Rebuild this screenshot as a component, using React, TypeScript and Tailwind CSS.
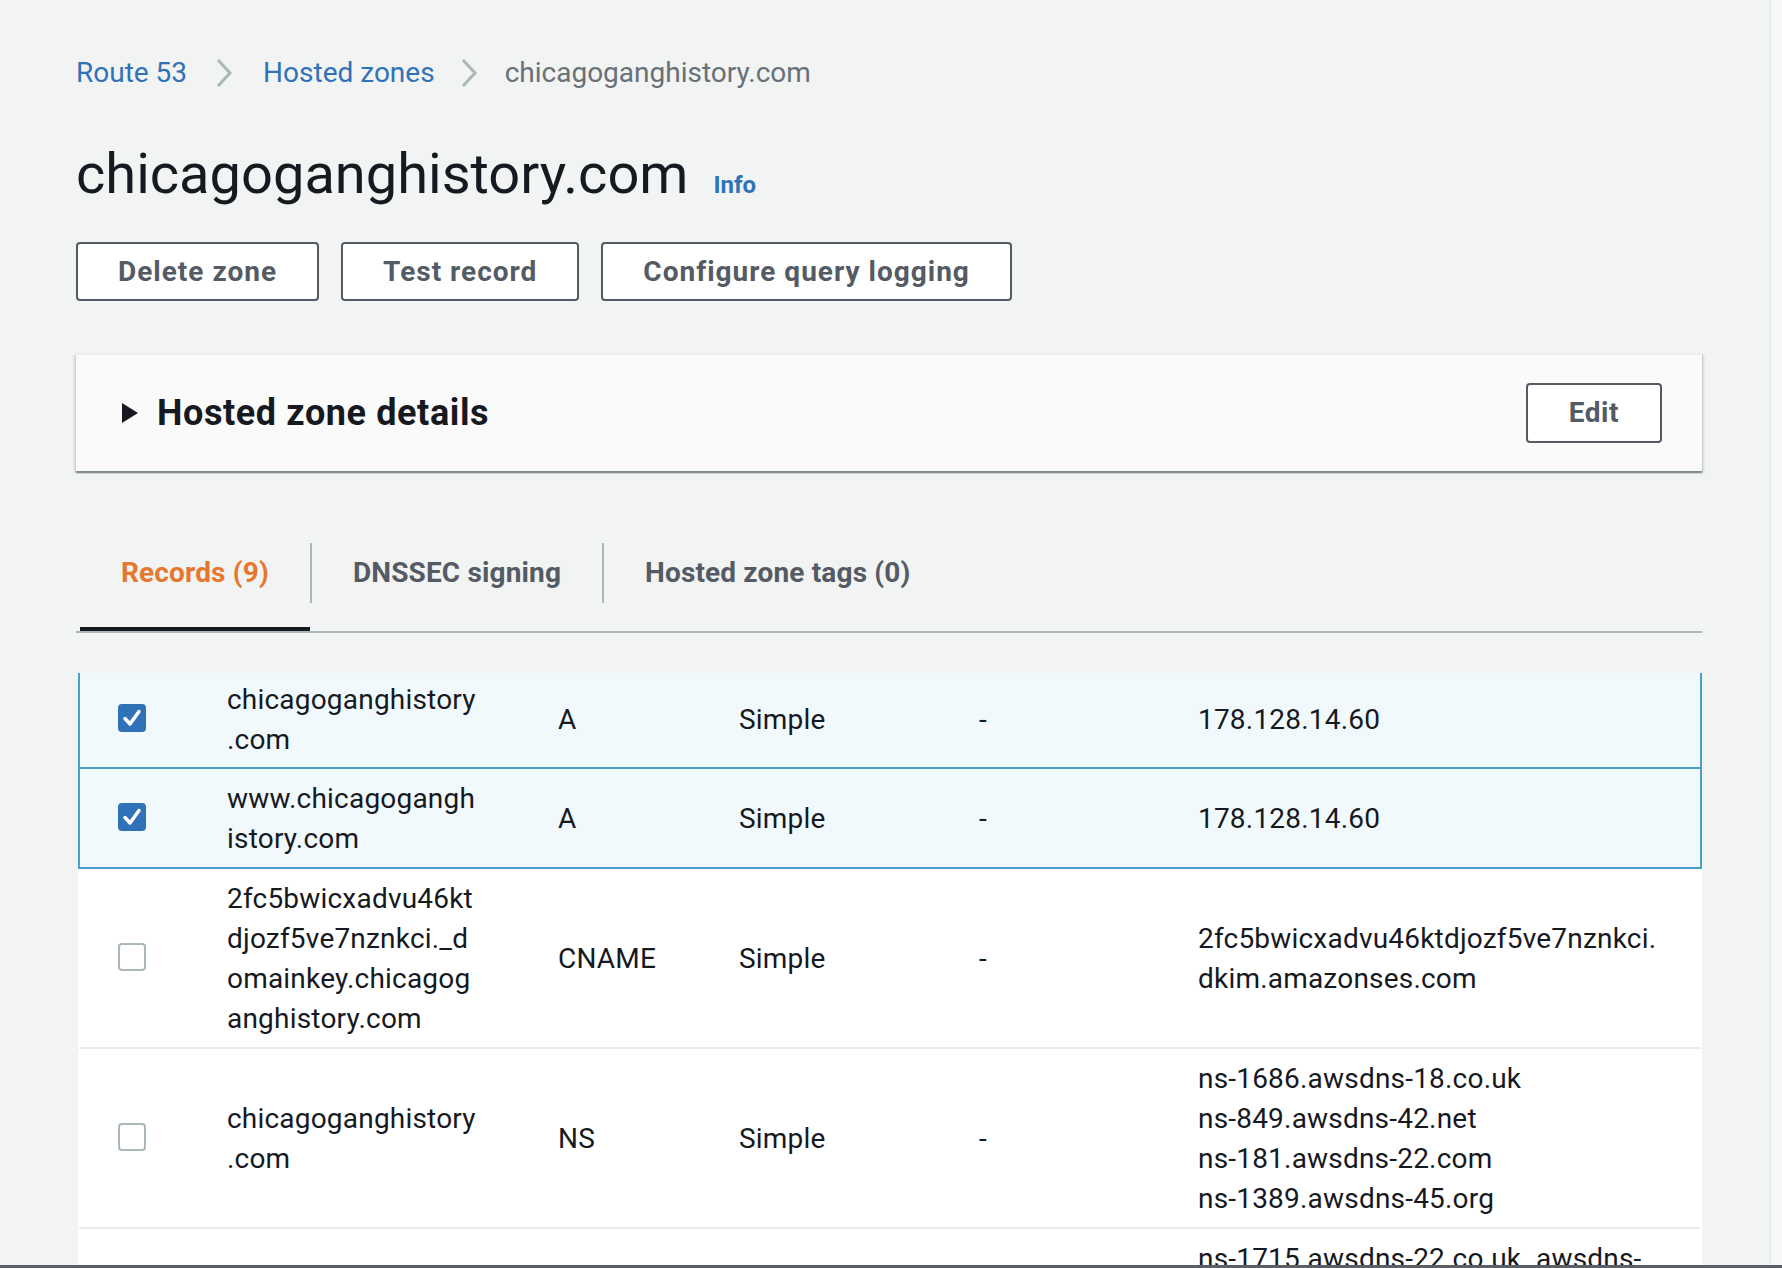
import React from 'react';

type RecordRow = {
  checked: boolean;
  name: string[];
  type: string;
  routing: string;
  diff: string;
  value: string[];
};

const rows: RecordRow[] = [
  {
    checked: true,
    name: ['chicagoganghistory', '.com'],
    type: 'A',
    routing: 'Simple',
    diff: '-',
    value: ['178.128.14.60'],
  },
  {
    checked: true,
    name: ['www.chicagogangh', 'istory.com'],
    type: 'A',
    routing: 'Simple',
    diff: '-',
    value: ['178.128.14.60'],
  },
  {
    checked: false,
    name: ['2fc5bwicxadvu46kt', 'djozf5ve7nznkci._d', 'omainkey.chicagog', 'anghistory.com'],
    type: 'CNAME',
    routing: 'Simple',
    diff: '-',
    value: ['2fc5bwicxadvu46ktdjozf5ve7nznkci.', 'dkim.amazonses.com'],
  },
  {
    checked: false,
    name: ['chicagoganghistory', '.com'],
    type: 'NS',
    routing: 'Simple',
    diff: '-',
    value: ['ns-1686.awsdns-18.co.uk', 'ns-849.awsdns-42.net', 'ns-181.awsdns-22.com', 'ns-1389.awsdns-45.org'],
  },
  {
    checked: false,
    name: ['chicagoganghistory', '.com'],
    type: 'SOA',
    routing: 'Simple',
    diff: '-',
    value: ['ns-1715.awsdns-22.co.uk. awsdns-', 'hostmaster.amazon.com. 1 7200', '900 1209600 86400'],
  },
];

function Chevron({ left, right }: { left: string; right: string }) {
  return (
    <svg width="18" height="30" viewBox="0 0 18 30" className={`${left} ${right} shrink-0`}>
      <polyline points="3,2 15,15 3,28" fill="none" stroke="#aab7b8" strokeWidth="3" />
    </svg>
  );
}

function Checkbox({ checked }: { checked: boolean }) {
  if (checked) {
    return (
      <div className="w-[28px] h-[28px] rounded-[4px] bg-[#2f72b8] flex items-center justify-center">
        <svg width="28" height="28" viewBox="0 0 28 28">
          <polyline
            points="7,14.5 12,20 21,7.5"
            fill="none"
            stroke="white"
            strokeWidth="3.5"
            strokeLinecap="round"
            strokeLinejoin="round"
          />
        </svg>
      </div>
    );
  }
  return <div className="w-[28px] h-[28px] rounded-[4px] border-2 border-[#aab7b8] bg-white" />;
}

function Lines({ lines }: { lines: string[] }) {
  return (
    <div className="whitespace-nowrap">
      {lines.map((l, i) => (
        <div key={i}>{l}</div>
      ))}
    </div>
  );
}

function Row({ row, first }: { row: RecordRow; first: boolean }) {
  const base =
    'grid grid-cols-[109px_331px_181px_240px_219px_1fr] items-center pl-[38px] border-x-2 border-b-2 text-[28px] leading-[40px] tracking-[0.2px] text-[#16191f]';
  const tone = row.checked
    ? 'bg-[#f1f9fd] border-[#46a1c8]'
    : 'bg-white border-x-transparent border-b-[#eaeded]';
  const pad = first ? 'pt-[7px] pb-[7px]' : 'pt-[10px] pb-[8px]';
  return (
    <div className={`${base} ${tone} ${pad}`}>
      <div className="mb-[5px]">
        <Checkbox checked={row.checked} />
      </div>
      <Lines lines={row.name} />
      <div>{row.type}</div>
      <div>{row.routing}</div>
      <div>{row.diff}</div>
      <Lines lines={row.value} />
    </div>
  );
}

function Tab({ label, active }: { label: string; active?: boolean }) {
  return (
    <div className="flex flex-col">
      <div
        className={`h-[60px] flex items-center px-[41px] text-[28px] font-bold tracking-[0.15px] whitespace-nowrap ${
          active ? 'text-[#e5772f]' : 'text-[#545b64]'
        }`}
      >
        {label}
      </div>
      <div className="h-[24px]" />
      <div className={`h-[4px] ${active ? 'bg-[#16191f]' : 'bg-transparent'}`} />
    </div>
  );
}

export default function App() {
  return (
    <div className="h-[1268px] flex flex-col overflow-hidden bg-[#f2f3f3] font-['Roboto',sans-serif]">
      <div className="flex flex-1 min-h-0">
        <main className="flex-1 min-w-0 overflow-hidden pl-[76px]">
          <div className="w-[1626px]">
            {/* breadcrumb */}
            <nav className="mt-[53px] h-[40px] flex items-center text-[28px] leading-[40px]">
              <span className="text-[#2f72b8]">Route 53</span>
              <Chevron left="ml-[28px]" right="mr-[30px]" />
              <span className="text-[#2f72b8]">Hosted zones</span>
              <Chevron left="ml-[25px]" right="mr-[27px]" />
              <span className="text-[#687078]">chicagoganghistory.com</span>
            </nav>

            {/* title */}
            <div className="mt-[45px] flex items-baseline">
              <h1 className="text-[56px] leading-[72px] font-normal text-[#16191f]">chicagoganghistory.com</h1>
              <span className="ml-[25px] text-[24px] font-bold text-[#2f72b8]">Info</span>
            </div>

            {/* actions */}
            <div className="mt-[32px] flex gap-[22px]">
              {['Delete zone', 'Test record', 'Configure query logging'].map((b) => (
                <button
                  key={b}
                  className="h-[59px] px-[40px] border-2 border-[#545b64] rounded-[4px] bg-white text-[28px] font-bold tracking-[1px] text-[#545b64]"
                >
                  {b}
                </button>
              ))}
            </div>

            {/* details panel */}
            <section className="mt-[52px] bg-[#fafafa] border-t-2 border-[#eaeded] shadow-[0_2px_1px_0_rgba(0,28,36,0.35),2px_2px_2px_0_rgba(0,28,36,0.12),-2px_2px_2px_0_rgba(0,28,36,0.12)] flex items-center justify-between pl-[46px] pr-[40px] py-[28px]">
              <div className="flex items-center gap-[19px]">
                <svg width="16" height="20" viewBox="0 0 16 20">
                  <polygon points="0,0 16,10 0,20" fill="#16191f" />
                </svg>
                <h2 className="text-[36px] leading-[44px] font-bold tracking-[0.6px] text-[#16191f]">
                  Hosted zone details
                </h2>
              </div>
              <button className="h-[60px] px-[41px] border-2 border-[#545b64] rounded-[4px] bg-white text-[28px] font-bold tracking-[0.5px] text-[#545b64]">
                Edit
              </button>
            </section>

            {/* tabs */}
            <div className="mt-[72px] flex items-start pl-[4px] border-b-2 border-[#aab7b8]">
              <Tab label="Records (9)" active />
              <div className="w-[2px] h-[60px] bg-[#aab7b8]" />
              <Tab label="DNSSEC signing" />
              <div className="w-[2px] h-[60px] bg-[#aab7b8]" />
              <Tab label="Hosted zone tags (0)" />
            </div>

            {/* records table */}
            <div className="mt-[40px] ml-[2px]">
              {rows.map((r, i) => (
                <Row key={i} row={r} first={i === 0} />
              ))}
            </div>
          </div>
        </main>
        <div className="w-[12px] bg-[#f7f8f8] border-l border-[#e3e6e6]" />
      </div>
      <div className="h-[3px] bg-[#5b6067]" />
    </div>
  );
}
